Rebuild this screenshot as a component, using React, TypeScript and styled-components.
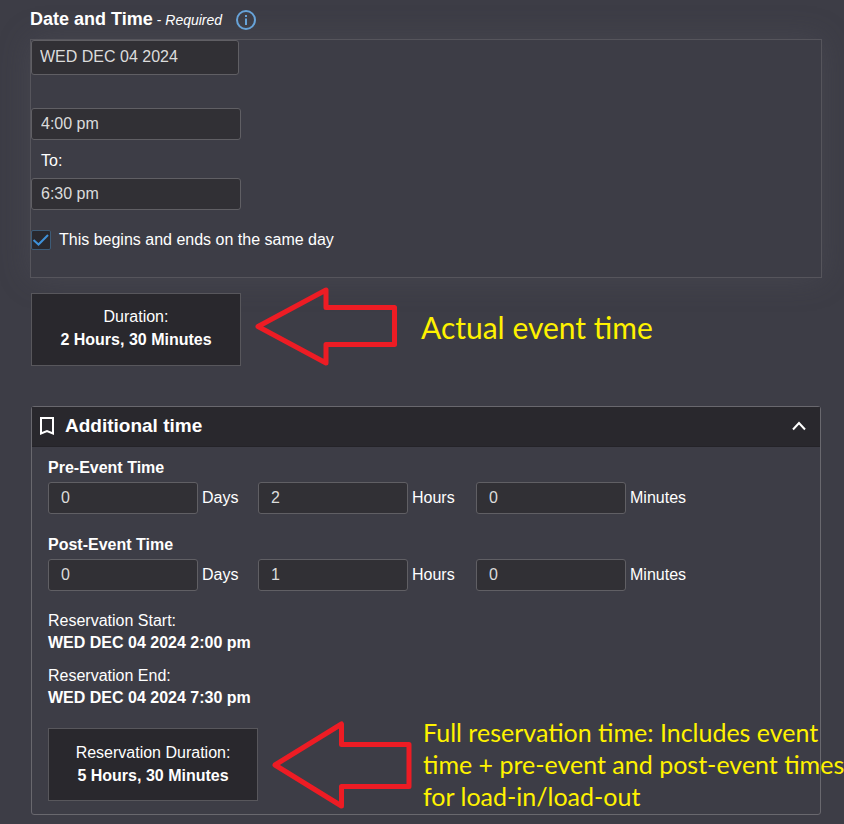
import React from "react";
import styled, { createGlobalStyle } from "styled-components";

const GlobalStyle = createGlobalStyle`
  * { box-sizing: border-box; }
  body {
    margin: 0;
    background: #3d3d46;
    color: #fff;
    font-family: "Liberation Sans", Arial, sans-serif;
    font-size: 16px;
    line-height: 22px;
  }
`;

const Page = styled.main`
  padding: 8px 22px 9px 30px;
`;

const Heading = styled.header`
  display: flex;
  align-items: center;
  height: 24px;
  margin-bottom: 7px;
`;

const Title = styled.h2`
  margin: 0;
  padding-bottom: 2px;
  font-size: 18px;
  line-height: 22px;
`;

const Required = styled.span`
  margin: 0 13px 0 4px;
  font-size: 14px;
`;

const IconButton = styled.button`
  display: flex;
  padding: 0;
  border: 0;
  background: none;
  color: inherit;
  cursor: pointer;
`;

const DatePanel = styled.section`
  display: flex;
  flex-direction: column;
  align-items: flex-start;
  border: 1px solid #56555c;
  padding-bottom: 27px;
  box-shadow: 0 0 30px rgba(92, 92, 104, 0.3);
`;

const Field = styled.input<{ $width: number; $height?: number; $pad?: number }>`
  flex: none;
  width: ${(p) => p.$width}px;
  height: ${(p) => p.$height ?? 32}px;
  padding: 0 ${(p) => p.$pad ?? 9}px 1px;
  border: 1px solid #605f64;
  border-radius: 3px;
  background: #313035;
  color: #dcdcdc;
  font: inherit;
  outline: none;
`;

const TimeRange = styled.div`
  display: flex;
  flex-direction: column;
  margin-top: 33px;
`;

const ToLabel = styled.label`
  padding: 10px 0 6px 10px;
`;

const CheckLabel = styled.label`
  display: flex;
  align-items: center;
  gap: 8px;
  height: 20px;
  margin-top: 20px;
`;

const CheckBox = styled.span`
  display: grid;
  width: 20px;
  height: 20px;

  & > * {
    grid-area: 1 / 1;
  }

  svg {
    pointer-events: none;
  }
`;

const CheckInput = styled.input`
  appearance: none;
  width: 20px;
  height: 20px;
  margin: 0;
  border: 1px solid #3d5c78;
  border-radius: 2px;
  background: #29282d;

  &:not(:checked) + svg {
    visibility: hidden;
  }
`;

const DurationRow = styled.div`
  display: flex;
  align-items: center;
  margin: 9px 0 40px 1px;
`;

const DurationBox = styled.div<{ $low?: boolean }>`
  display: flex;
  flex-direction: column;
  align-items: center;
  justify-content: center;
  flex: none;
  align-self: ${(p) => (p.$low ? "flex-end" : "center")};
  width: 210px;
  height: 73px;
  padding-bottom: ${(p) => (p.$low ? 4 : 0)}px;
  border: 1px solid #58575c;
  background: #29282d;
  line-height: 23px;
`;

const Arrow = styled.svg`
  flex: none;
  margin-left: 14px;
  fill: none;
  stroke: #ed1c24;
  stroke-width: 5;
  stroke-linejoin: round;
`;

const Note = styled.p<{ $large?: boolean }>`
  margin: 0 0 0 ${(p) => (p.$large ? 23 : 11)}px;
  color: #fff200;
  font-family: Lato, Carlito, sans-serif;
  font-size: ${(p) => (p.$large ? 30 : 25)}px;
  line-height: 32px;
  white-space: nowrap;
`;

const Panel = styled.section`
  margin: 0 1px;
  border: 1px solid #69686e;
  border-radius: 3px;
`;

const PanelHeader = styled.header`
  display: flex;
  align-items: center;
  height: 40px;
  padding: 0 14px 2px 8px;
  border-bottom: 1px solid #242328;
  background: #29282d;
`;

const PanelTitle = styled.h3`
  flex: 1;
  margin: 0 0 0 11px;
  font-size: 19px;
  line-height: 24px;
`;

const PanelBody = styled.div`
  padding: 10px 16px 1px;
`;

const TimeGroup = styled.fieldset`
  min-width: 0;
  margin: 0 0 20px;
  padding: 0;
  border: 0;
`;

const Legend = styled.legend`
  margin-bottom: 3px;
  padding: 0;
  font-weight: bold;
`;

const UnitGrid = styled.div`
  display: grid;
  grid-template-columns: 210px 218px auto;
`;

const Unit = styled.label`
  display: flex;
  align-items: center;
  gap: 4px;
`;

const Reservations = styled.div`
  margin-top: -1px;
`;

const Reservation = styled.dl`
  margin: 0 0 11px;

  dd {
    margin: 0;
    font-weight: bold;
  }
`;

const ReservationRow = styled(DurationRow)`
  height: 98px;
  margin: -5px 0 0;
`;

function UnitFields({ title, values }: { title: string; values: string[] }) {
  const units = ["Days", "Hours", "Minutes"];
  return (
    <TimeGroup>
      <Legend>{title}</Legend>
      <UnitGrid>
        {units.map((unit, i) => (
          <Unit key={unit}>
            <Field $width={150} $pad={12} defaultValue={values[i]} />
            {unit}
          </Unit>
        ))}
      </UnitGrid>
    </TimeGroup>
  );
}

export default function App() {
  return (
    <>
      <GlobalStyle />
      <Page>
        <Heading>
          <Title>Date and Time</Title>
          <Required>
            - <em>Required</em>
          </Required>
          <IconButton type="button" aria-label="More information">
            <svg width="22" height="22" viewBox="0 0 22 22" fill="none" stroke="#67a3d9" strokeWidth="2">
              <circle cx="11" cy="11" r="9" />
              <path d="M11 9.5V16M11 6v2" />
            </svg>
          </IconButton>
        </Heading>

        <DatePanel>
          <Field $width={208} $height={35} $pad={8} aria-label="Date" defaultValue="WED DEC 04 2024" />
          <TimeRange>
            <Field $width={210} aria-label="Start time" defaultValue="4:00 pm" />
            <ToLabel htmlFor="end-time">To:</ToLabel>
            <Field $width={210} id="end-time" defaultValue="6:30 pm" />
          </TimeRange>
          <CheckLabel>
            <CheckBox>
              <CheckInput type="checkbox" defaultChecked />
              <svg width="20" height="20" viewBox="0 0 20 20" fill="none" stroke="#3f91d8" strokeWidth="2">
                <path d="M2.500 10l5 4.500L17 5" />
              </svg>
            </CheckBox>
            This begins and ends on the same day
          </CheckLabel>
        </DatePanel>

        <DurationRow>
          <DurationBox $low>
            <span>Duration:</span>
            <strong>2 Hours, 30 Minutes</strong>
          </DurationBox>
          <Arrow width="143" height="79" viewBox="0 0 143 79">
            <path d="M3 39.500L71 3V20.500H139.500V57.500H71V76Z" />
          </Arrow>
          <Note $large>Actual event time</Note>
        </DurationRow>

        <Panel>
          <PanelHeader>
            <svg width="14" height="18" viewBox="0 0 14 18" fill="none" stroke="#fff" strokeWidth="2">
              <path d="M1 1H13V16.500L7 14L1 16.500Z" />
            </svg>
            <PanelTitle>Additional time</PanelTitle>
            <IconButton type="button" aria-label="Collapse additional time" aria-expanded="true">
              <svg width="14" height="10" viewBox="0 0 14 10" fill="none" stroke="#fff" strokeWidth="2">
                <path d="M1 8.500L7 2L13 8.500" />
              </svg>
            </IconButton>
          </PanelHeader>
          <PanelBody>
            <UnitFields title="Pre-Event Time" values={["0", "2", "0"]} />
            <UnitFields title="Post-Event Time" values={["0", "1", "0"]} />
            <Reservations>
              <Reservation>
                <dt>Reservation Start:</dt>
                <dd>WED DEC 04 2024 2:00 pm</dd>
              </Reservation>
              <Reservation>
                <dt>Reservation End:</dt>
                <dd>WED DEC 04 2024 7:30 pm</dd>
              </Reservation>
            </Reservations>
            <ReservationRow>
              <DurationBox>
                <span>Reservation Duration:</span>
                <strong>5 Hours, 30 Minutes</strong>
              </DurationBox>
              <Arrow width="140" height="92" viewBox="0 0 140 92">
                <path d="M3 47L69.500 6V26.500H137V68.500H69.500V88Z" />
              </Arrow>
              <Note>
                Full reservation time: Includes event
                <br />
                time + pre-event and post-event times
                <br />
                for load-in/load-out
              </Note>
            </ReservationRow>
          </PanelBody>
        </Panel>
      </Page>
    </>
  );
}
